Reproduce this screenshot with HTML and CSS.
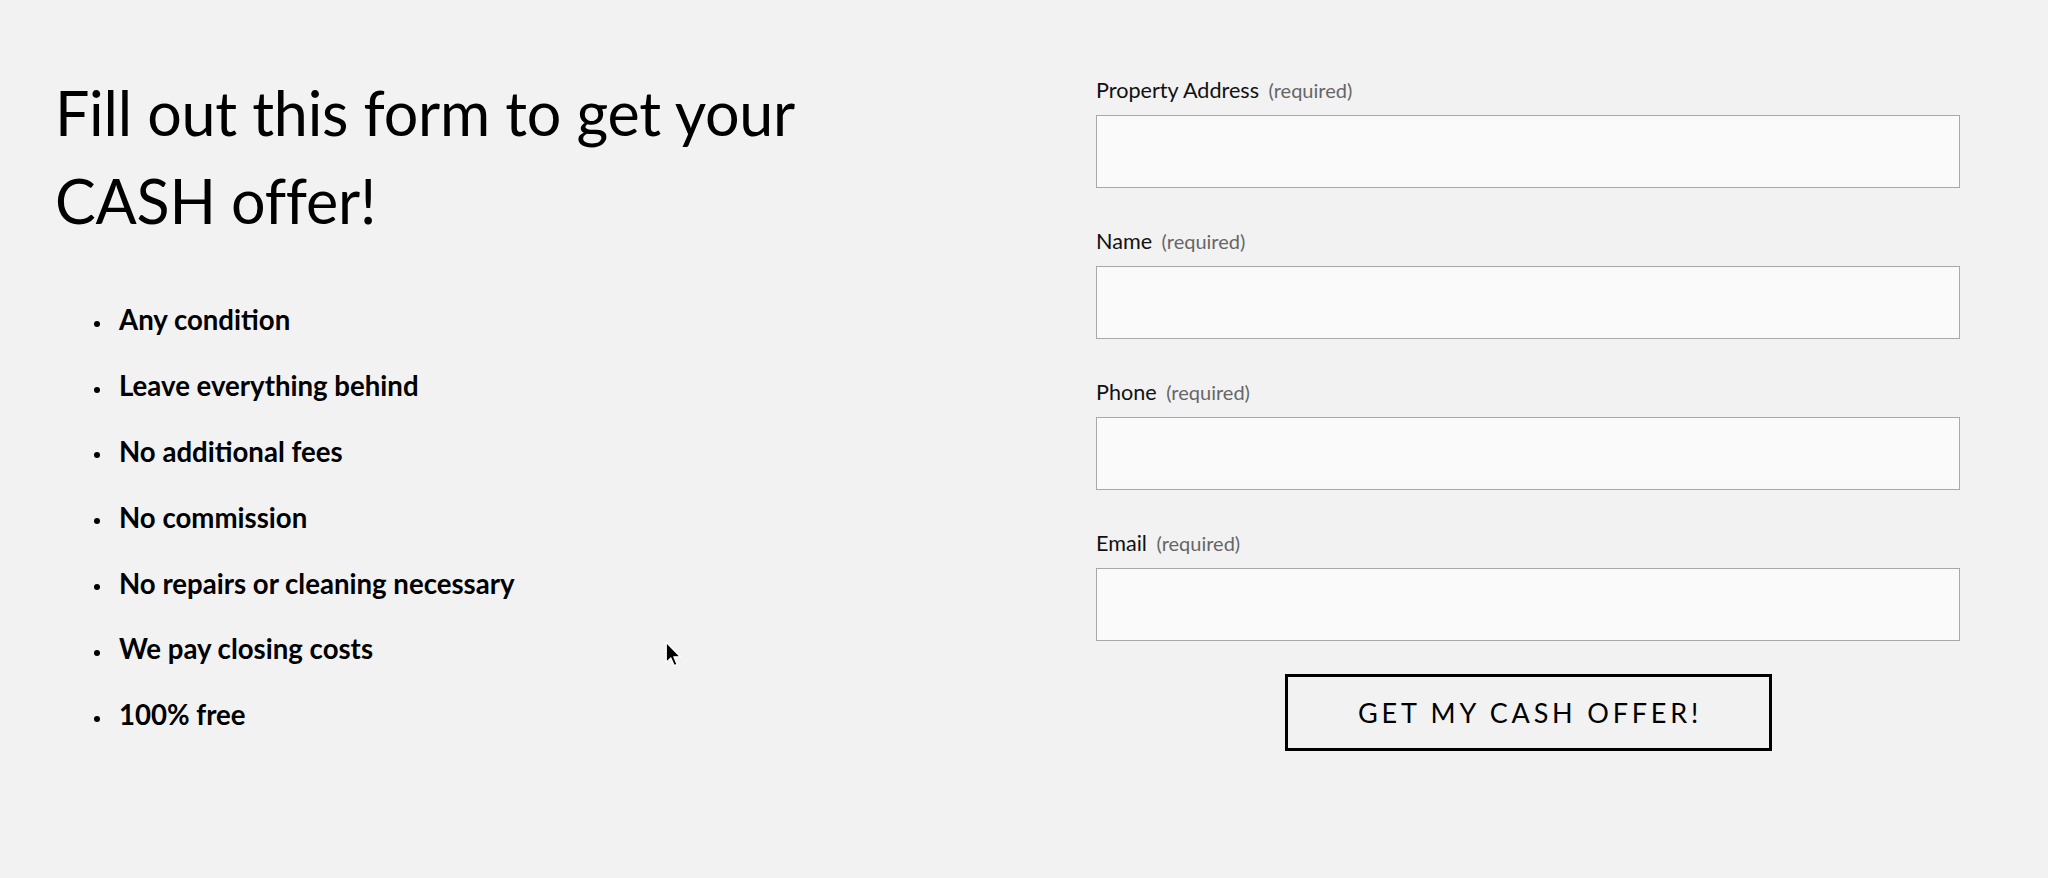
FILE: index.html
```html
<!DOCTYPE html>
<html lang="en">
<head>
<meta charset="utf-8">
<title>Get your cash offer</title>
<link rel="stylesheet" href="styles.css">
</head>
<body>
<main class="page">
  <section class="intro">
    <h1 class="title">Fill out this form to get your CASH offer!</h1>
    <ul class="perks">
      <li class="perk">Any condition</li>
      <li class="perk">Leave everything behind</li>
      <li class="perk">No additional fees</li>
      <li class="perk">No commission</li>
      <li class="perk">No repairs or cleaning necessary</li>
      <li class="perk">We pay closing costs</li>
      <li class="perk">100% free</li>
    </ul>
  </section>
  <form class="offer-form">
    <div class="field">
      <label class="field-label">Property Address <span class="req">(required)</span></label>
      <input class="field-input" type="text">
    </div>
    <div class="field">
      <label class="field-label">Name <span class="req">(required)</span></label>
      <input class="field-input" type="text">
    </div>
    <div class="field">
      <label class="field-label">Phone <span class="req">(required)</span></label>
      <input class="field-input" type="text">
    </div>
    <div class="field">
      <label class="field-label">Email <span class="req">(required)</span></label>
      <input class="field-input" type="text">
    </div>
    <div class="actions">
      <button class="submit" type="button">GET MY CASH OFFER!</button>
    </div>
  </form>
</main>
<div class="cursor">
  <svg width="17" height="27" viewBox="0 0 14 22"><path d="M1 1 L1 17.5 L4.8 13.8 L7.6 20.2 L10 19.2 L7.3 12.9 L12.6 12.9 Z" fill="#000" stroke="#fff" stroke-width="1.1" stroke-linejoin="round"/></svg>
</div>
</body>
</html>
```
FILE: styles.css
```css
html, body {
  margin: 0;
  padding: 0;
  background: #f2f2f2;
}

body {
  font-family: Lato, "Open Sans", sans-serif;
  color: #000;
  width: 2048px;
  height: 878px;
  overflow: hidden;
}

.page {
  display: flex;
  justify-content: space-between;
  padding: 0 88px 0 55px;
}

.intro {
  width: 800px;
}

.title {
  margin: 69px 0 0;
  font-size: 61px;
  line-height: 88px;
  font-weight: 400;
  letter-spacing: -0.25px;
  max-width: 780px;
}

.perks {
  list-style: none;
  margin: 53px 0 0;
  padding: 0 0 0 39px;
}

.perk {
  font-size: 27.6px;
  line-height: 44px;
  font-weight: 700;
  margin-bottom: 21.9px;
}

.perk::before {
  content: "";
  display: inline-block;
  width: 6px;
  height: 6px;
  border-radius: 50%;
  background: #000;
  vertical-align: 0.12em;
  margin-right: 19px;
}

.offer-form {
  width: 864px;
  padding-top: 74px;
}

.field {
  display: flex;
  flex-direction: column;
  margin-bottom: 37px;
}

.field-label {
  font-size: 21.6px;
  line-height: 28px;
  height: 28px;
  margin-top: 2px;
  margin-bottom: 11px;
  color: #111;
}

.req {
  font-size: 20px;
  line-height: 1;
  color: #666;
  margin-left: 4px;
}

.field-input {
  box-sizing: border-box;
  width: 100%;
  height: 73px;
  margin: 0;
  border: 1px solid #a8a8a8;
  background: #fafafa;
  outline: none;
}

.actions {
  display: flex;
  justify-content: center;
  margin-top: -4px;
}

.submit {
  box-sizing: border-box;
  width: 487px;
  height: 77px;
  border: 3px solid #000;
  background: transparent;
  font-family: Lato, "Open Sans", sans-serif;
  font-size: 27px;
  font-weight: 400;
  letter-spacing: 3.8px;
  padding: 0 0 0 4px;
  color: #000;
}

.cursor {
  position: absolute;
  left: 665px;
  top: 641px;
  width: 17px;
  height: 27px;
}
```
